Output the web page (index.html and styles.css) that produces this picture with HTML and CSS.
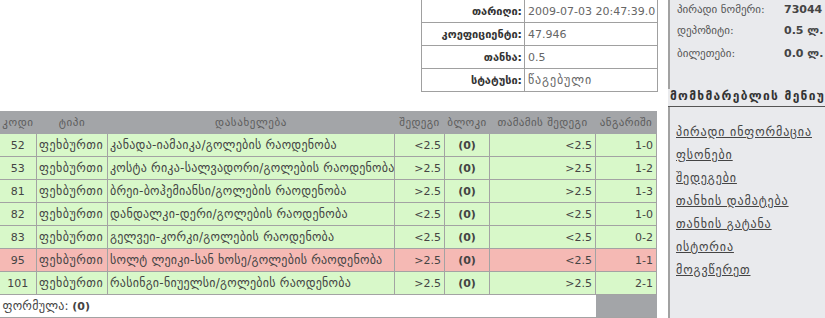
FILE: index.html
```html
<!DOCTYPE html>
<html lang="ka">
<head>
<meta charset="utf-8">
<link rel="stylesheet" href="styles.css">
</head>
<body>
<div class="page">
  <div class="main">
    <table class="info">
      <tr><th>თარიღი:</th><td>2009-07-03 20:47:39.0</td></tr>
      <tr><th>კოეფიციენტი:</th><td>47.946</td></tr>
      <tr><th>თანხა:</th><td>0.5</td></tr>
      <tr><th>სტატუსი:</th><td class="ka">წაგებული</td></tr>
    </table>
    <table class="bets">
      <colgroup>
        <col class="c1"><col class="c2"><col class="c3"><col class="c4"><col class="c5"><col class="c6"><col class="c7">
      </colgroup>
      <thead>
        <tr><th>კოდი</th><th>ტიპი</th><th>დასახელება</th><th>შედეგი</th><th>ბლოკი</th><th>თამამის შედეგი</th><th>ანგარიში</th></tr>
      </thead>
      <tbody>
        <tr class="win"><td class="ctr">52</td><td class="ka">ფეხბურთი</td><td class="ka">კანადა-იამაიკა/გოლების რაოდენობა</td><td class="r">&lt;2.5</td><td class="blk">(0)</td><td class="r">&lt;2.5</td><td class="r">1-0</td></tr>
        <tr class="win"><td class="ctr">53</td><td class="ka">ფეხბურთი</td><td class="ka">კოსტა რიკა-სალვადორი/გოლების რაოდენობა</td><td class="r">&gt;2.5</td><td class="blk">(0)</td><td class="r">&gt;2.5</td><td class="r">1-2</td></tr>
        <tr class="win"><td class="ctr">81</td><td class="ka">ფეხბურთი</td><td class="ka">ბრეი-ბოჰემიანსი/გოლების რაოდენობა</td><td class="r">&gt;2.5</td><td class="blk">(0)</td><td class="r">&gt;2.5</td><td class="r">1-3</td></tr>
        <tr class="win"><td class="ctr">82</td><td class="ka">ფეხბურთი</td><td class="ka">დანდალკი-დერი/გოლების რაოდენობა</td><td class="r">&lt;2.5</td><td class="blk">(0)</td><td class="r">&lt;2.5</td><td class="r">1-0</td></tr>
        <tr class="win"><td class="ctr">83</td><td class="ka">ფეხბურთი</td><td class="ka">გელვეი-კორკი/გოლების რაოდენობა</td><td class="r">&lt;2.5</td><td class="blk">(0)</td><td class="r">&lt;2.5</td><td class="r">0-2</td></tr>
        <tr class="lose"><td class="ctr">95</td><td class="ka">ფეხბურთი</td><td class="ka">სოლტ ლეიკი-სან ხოსე/გოლების რაოდენობა</td><td class="r">&gt;2.5</td><td class="blk">(0)</td><td class="r">&lt;2.5</td><td class="r">1-1</td></tr>
        <tr class="win"><td class="ctr">101</td><td class="ka">ფეხბურთი</td><td class="ka">რასინგი-ნიუელსი/გოლების რაოდენობა</td><td class="r">&gt;2.5</td><td class="blk">(0)</td><td class="r">&gt;2.5</td><td class="r">2-1</td></tr>
      </tbody>
      <tfoot>
        <tr><td colspan="6" class="formula"><span class="ka">ფორმულა:</span> <b>(0)</b></td><td class="grey"></td></tr>
      </tfoot>
    </table>
  </div>
  <aside class="side">
    <div class="stat"><span class="lbl">პირადი ნომერი:</span><span class="val">73044</span></div>
    <div class="stat"><span class="lbl">დეპოზიტი:</span><span class="val">0.5 ლ.</span></div>
    <div class="stat"><span class="lbl">ბილეთები:</span><span class="val">0.0 ლ.</span></div>
    <div class="menu-title">მომხმარებლის მენიუ</div>
    <nav class="menu">
      <a href="#">პირადი ინფორმაცია</a>
      <a href="#">ფსონები</a>
      <a href="#">შედეგები</a>
      <a href="#">თანხის დამატება</a>
      <a href="#">თანხის გატანა</a>
      <a href="#">ისტორია</a>
      <a href="#">მოგვწერეთ</a>
    </nav>
  </aside>
</div>
</body>
</html>
```

FILE: styles.css
```css
html, body {
  margin: 0;
  padding: 0;
  background: #ffffff;
  overflow: hidden;
}
body {
  font-family: "DejaVu Sans", Verdana, sans-serif;
  font-size: 11px;
  color: #444444;
  width: 825px;
  height: 318px;
}
.page {
  display: flex;
  width: 825px;
  height: 318px;
  overflow: hidden;
}
.main {
  width: 657px;
  flex: 0 0 657px;
  display: flex;
  flex-direction: column;
  align-items: flex-end;
}
.ka {
  font-size: 12px;
  letter-spacing: 0.25px;
}
.info {
  border-collapse: collapse;
  width: 237px;
  margin-top: -1px;
  margin-right: -1px;
}
.info th, .info td {
  border: 1px solid #a0a0a0;
  height: 22px;
  padding: 0;
  white-space: nowrap;
}
.info th {
  width: 100px;
  text-align: right;
  padding-right: 2px;
  color: #333333;
  font-weight: bold;
}
.info td {
  padding-left: 3px;
  color: #666666;
}
.info td.ka {
  letter-spacing: 0.9px;
}
.bets {
  margin-top: 19px;
  border-collapse: collapse;
  table-layout: fixed;
  width: 657px;
}
.c1 { width: 37px; }
.c2 { width: 71px; }
.c3 { width: 287px; }
.c4 { width: 50px; }
.c5 { width: 45px; }
.c6 { width: 106px; }
.c7 { width: 61px; }
.bets thead th {
  background: #a3a5a8;
  color: #5c5c5c;
  font-weight: normal;
  font-size: 11px;
  letter-spacing: 0.6px;
  height: 23px;
  padding: 0;
  text-align: center;
  white-space: nowrap;
  overflow: hidden;
}
.bets thead th:nth-child(4),
.bets thead th:nth-child(5),
.bets thead th:nth-child(6),
.bets thead th:nth-child(7) {
  letter-spacing: 0.4px;
}
.bets tbody td {
  border: 1px solid #a3a3a3;
  height: 22px;
  padding: 0 3px;
  white-space: nowrap;
  overflow: hidden;
  color: #444444;
}
.bets tbody td.ka {
  padding: 0 2px;
}
.bets tbody td:nth-child(2) {
  letter-spacing: 0.5px;
}
.bets tbody tr:first-child td {
  border-top: none;
}
.bets td:first-child {
  border-left: none;
}
.win td { background: #d8f8c9; }
.lose td { background: #f5b9b4; }
.ctr { text-align: center; }
.r { text-align: right; }
.blk {
  text-align: center;
  font-weight: bold;
  color: #555555;
}
.bets tfoot td {
  height: 22px;
  border-bottom: 1px solid #a3a3a3;
  padding: 0 3px;
}
.formula {
  background: #ffffff;
  color: #444444;
}
.formula b { color: #444444; }
.grey { background: #a3a5a8; }
.side {
  margin-left: 11px;
  flex: 0 0 200px;
  width: 200px;
  background: #e9eaed;
  border-left: 2px solid #a2a2a2;
  color: #555555;
  display: flex;
  flex-direction: column;
}
.stat {
  display: flex;
  height: 23px;
  align-items: center;
  padding-left: 7px;
  white-space: nowrap;
}
.stat:first-child {
  height: 19px;
}
.lbl {
  width: 107px;
  flex: 0 0 107px;
}
.val {
  font-weight: bold;
  color: #444444;
}
.menu-title {
  margin-top: 24px;
  margin-left: -2px;
  padding-left: 2px;
  font-weight: bold;
  font-size: 12px;
  letter-spacing: 1.3px;
  color: #333333;
  height: 17px;
  border-bottom: 1px solid #555555;
  white-space: nowrap;
  background: #e9eaed;
}
.menu {
  display: flex;
  flex-direction: column;
  padding-left: 6px;
  padding-top: 15px;
}
.menu a {
  color: #444444;
  font-size: 12px;
  letter-spacing: 0.9px;
  text-decoration: underline;
  height: 23px;
  line-height: 20px;
  white-space: nowrap;
}
```
